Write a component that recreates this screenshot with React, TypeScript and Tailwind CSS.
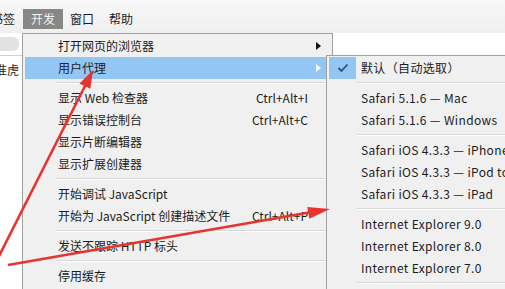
import React from "react";

const font = { fontFamily: "'Noto Sans CJK SC', 'Noto Sans', sans-serif" };

function Row({
  label,
  shortcut,
  arrow,
  active,
}: {
  label: string;
  shortcut?: string;
  arrow?: boolean;
  active?: boolean;
}) {
  return (
    <div
      className={
        "mx-[2px] flex h-[22px] items-center pl-[33px] " +
        (active ? "bg-[#93c6f2]" : "")
      }
    >
      <span className="flex-1 whitespace-nowrap">{label}</span>
      {shortcut && <span className="mr-[22px] whitespace-nowrap">{shortcut}</span>}
      {arrow && (
        <svg width="5" height="8" viewBox="0 0 5 8" className="mr-[9px]">
          <path d="M0 0 L5 4 L0 8 Z" fill={active ? "#f4f8fc" : "#111"} />
        </svg>
      )}
    </div>
  );
}

function Sep({ left }: { left: string }) {
  return (
    <div className="flex h-[8px] items-center">
      <div className={left + " h-[2px] flex-1 border-t border-[#d7d7d7] border-b border-b-white"} />
    </div>
  );
}

function SubRow({ label, checked }: { label: string; checked?: boolean }) {
  return (
    <div className="flex h-[22px] items-center">
      <div
        className={
          "ml-[2px] flex h-[22px] w-[27px] shrink-0 items-center justify-center " +
          (checked ? "bg-[#93c6f2]" : "")
        }
      >
        {checked && (
          <svg width="12" height="10" viewBox="0 0 12 10">
            <path d="M1.5 5 L4.5 8 L10.5 1.5" fill="none" stroke="#2d4f80" strokeWidth="1.8" />
          </svg>
        )}
      </div>
      <span className="ml-[5px] shrink-0 whitespace-nowrap tracking-[0.35px]">{label}</span>
    </div>
  );
}

export default function App() {
  return (
    <div
      className="relative h-[289px] w-[505px] overflow-hidden bg-white text-[12px] text-[#1c1c1c]"
      style={font}
    >
      {/* menu bar */}
      <div className="flex h-[33px] items-start bg-gradient-to-b from-[#f8f8f8] to-[#efefef] pt-[9px]">
        <div className="flex h-[20px] w-[23px] items-center overflow-hidden">
          <span className="ml-[-9px] whitespace-nowrap">书签</span>
        </div>
        <div className="flex h-[20px] w-[40px] items-center justify-center bg-[#878787] text-[#f2f2f2]">
          开发
        </div>
        <div className="ml-[7px] flex h-[20px] items-center">窗口</div>
        <div className="ml-[15px] flex h-[20px] items-center">帮助</div>
      </div>

      <div className="flex">
        {/* left strip */}
        <div className="w-[22px] shrink-0">
          <div className="flex h-[22px] items-center">
            <div className="h-[14px] w-[19px] rounded-r-[6px] bg-[#e2e2e2]" />
          </div>
          <div className="flex h-[28px] items-center overflow-hidden border-t border-[#d0d0d0]">
            <span className="ml-[-5px] whitespace-nowrap">准虎</span>
          </div>
        </div>

        {/* main menu */}
        <div className="h-[270px] w-[311px] shrink-0 border-l border-r border-t border-[#a0a0a0] bg-[#f0f0f0] pt-[1px]">
          <Row label="打开网页的浏览器" arrow />
          <Row label="用户代理" arrow active />
          <Sep left="ml-[33px]" />
          <Row label="显示 Web 检查器" shortcut="Ctrl+Alt+I" />
          <Row label="显示错误控制台" shortcut="Ctrl+Alt+C" />
          <Row label="显示片断编辑器" />
          <Row label="显示扩展创建器" />
          <Sep left="ml-[33px]" />
          <Row label="开始调试 JavaScript" />
          <Row label="开始为 JavaScript 创建描述文件" shortcut="Ctrl+Alt+P" />
          <Sep left="ml-[33px]" />
          <Row label="发送不跟踪 HTTP 标头" />
          <Sep left="ml-[33px]" />
          <Row label="停用缓存" />
        </div>

        {/* submenu */}
        <div className="relative ml-[-7px] mt-[22px] h-[250px] w-[200px] shrink-0 border border-[#a0a0a0] bg-[#f0f0f0] pt-[1px]">
          <SubRow label="默认（自动选取）" checked />
          <Sep left="ml-[30px]" />
          <SubRow label="Safari 5.1.6 — Mac" />
          <SubRow label="Safari 5.1.6 — Windows" />
          <Sep left="ml-[30px]" />
          <SubRow label="Safari iOS 4.3.3 — iPhone" />
          <SubRow label="Safari iOS 4.3.3 — iPod touch" />
          <SubRow label="Safari iOS 4.3.3 — iPad" />
          <Sep left="ml-[30px]" />
          <SubRow label="Internet Explorer 9.0" />
          <SubRow label="Internet Explorer 8.0" />
          <SubRow label="Internet Explorer 7.0" />
          <Sep left="ml-[30px]" />
        </div>
      </div>

      {/* red annotation arrows */}
      <svg
        className="pointer-events-none absolute left-0 top-0"
        width="505"
        height="289"
        viewBox="0 0 505 289"
      >
        <line x1="-2" y1="258" x2="87" y2="82" stroke="#e8342f" strokeWidth="2.6" />
        <polygon points="93,70 90.3,88.8 79.5,83.4" fill="#e8342f" />
        <line x1="8" y1="265" x2="312" y2="212" stroke="#e8342f" strokeWidth="2.6" />
        <polygon points="330,209 309.3,218.7 307.3,206.9" fill="#e8342f" />
      </svg>
    </div>
  );
}
